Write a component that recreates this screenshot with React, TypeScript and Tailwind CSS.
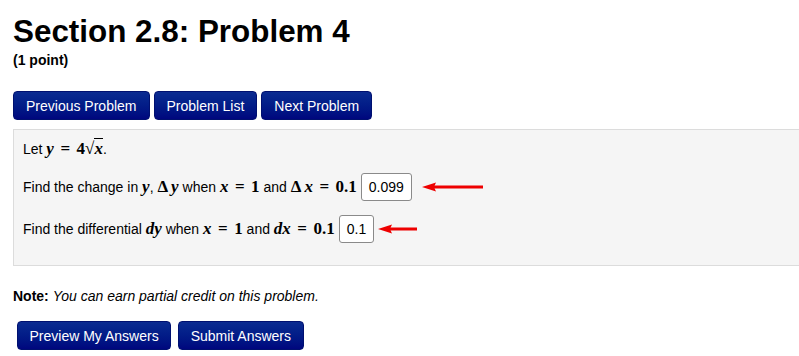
import React from 'react';

const sans = { fontFamily: '"Liberation Sans", Arial, sans-serif' };

function NavButton({ label, small }: { label: string; small?: boolean }) {
  return (
    <button
      className={`h-[29px] ${small ? 'px-[11.5px]' : 'px-[12px]'} rounded-[4px] border border-[#001070] bg-gradient-to-b from-[#0b2b91] to-[#00067e] text-white text-[14px] leading-none`}
    >
      {label}
    </button>
  );
}

function Answer({ value }: { value: string }) {
  return (
    <span className="inline-flex items-center h-[28px] px-[7px] bg-white border border-[#8a8a8a] rounded-[3px] text-[14px] text-black">
      {value}
    </span>
  );
}

function Arrow({ width }: { width: number }) {
  return (
    <svg width={width} height="10" viewBox={`0 0 ${width} 10`} className="shrink-0">
      <polygon points="0,5 14,0.5 12,5 14,9.5" fill="#ee0000" />
      <rect x="10" y="3.5" width={width - 10} height="3" fill="#ee0000" />
    </svg>
  );
}

// italic math variable
function V({ children }: { children: React.ReactNode }) {
  return <span className="italic">{children}</span>;
}

function Eq() {
  return <span className="mx-[2.25px]"> = </span>;
}

function Delta() {
  return <span className="mr-[3px]">Δ</span>;
}

function M({ children }: { children: React.ReactNode }) {
  return (
    <span className="font-bold text-[17px]" style={{ fontFamily: '"Liberation Serif", "Times New Roman", serif' }}>
      {children}
    </span>
  );
}

export default function App() {
  return (
    <div className="w-[799px] h-[356px] overflow-hidden bg-white text-black" style={sans}>
      <div className="pl-[13px] pt-[16px]">
        {/* Heading */}
        <h1 className="text-[31.4px] leading-[32px] font-bold">Section 2.8: Problem 4</h1>
        <div className="mt-[4px] text-[14px] leading-[16px] font-bold">(1 point)</div>

        {/* Navigation */}
        <div className="mt-[23px] flex gap-[4px]">
          <NavButton label="Previous Problem" />
          <NavButton label="Problem List" />
          <NavButton label="Next Problem" />
        </div>

        {/* Problem body */}
        <div className="mt-[9px] w-[820px] border border-[#dcdcdc] bg-[#f5f5f5] pl-[9px] pt-[9px] pb-[22px] text-[14px]">
          <div className="h-[20px] leading-[20px] whitespace-pre">
            Let{' '}
            <M>
              <V>y</V>
              <Eq />4<span className="font-normal">√</span>
              <span className="border-t-[1.5px] border-black">
                <V>x</V>
              </span>
            </M>
            .
          </div>
          <div className="mt-[14px] h-[28px] flex items-center whitespace-pre">
            <span>Find the change in </span>
            <M>
              <V>y</V>
            </M>
            <span>, </span>
            <M>
              <Delta />
              <V>y</V>
            </M>
            <span> when </span>
            <M>
              <V>x</V>
              <Eq />1
            </M>
            <span> and </span>
            <M>
              <Delta />
              <V>x</V>
              <Eq />0.1
            </M>
            <span className="ml-[4px]">
              <Answer value="0.099" />
            </span>
            <span className="ml-[10px] flex items-center">
              <Arrow width={61} />
            </span>
          </div>
          <div className="mt-[14px] h-[28px] flex items-center whitespace-pre">
            <span>Find the differential </span>
            <M>
              <V>dy</V>
            </M>
            <span> when </span>
            <M>
              <V>x</V>
              <Eq />1
            </M>
            <span> and </span>
            <M>
              <V>dx</V>
              <Eq />0.1
            </M>
            <span className="ml-[4px]">
              <Answer value="0.1" />
            </span>
            <span className="ml-[4px] flex items-center">
              <Arrow width={39} />
            </span>
          </div>
        </div>

        {/* Note */}
        <div className="mt-[22px] text-[14px] leading-[16px]">
          <span className="font-bold">Note:</span> <span className="italic">You can earn partial credit on this problem.</span>
        </div>

        {/* Submit */}
        <div className="mt-[17px] ml-[4px] flex gap-[7px]">
          <NavButton label="Preview My Answers" small />
          <NavButton label="Submit Answers" small />
        </div>
      </div>
    </div>
  );
}
